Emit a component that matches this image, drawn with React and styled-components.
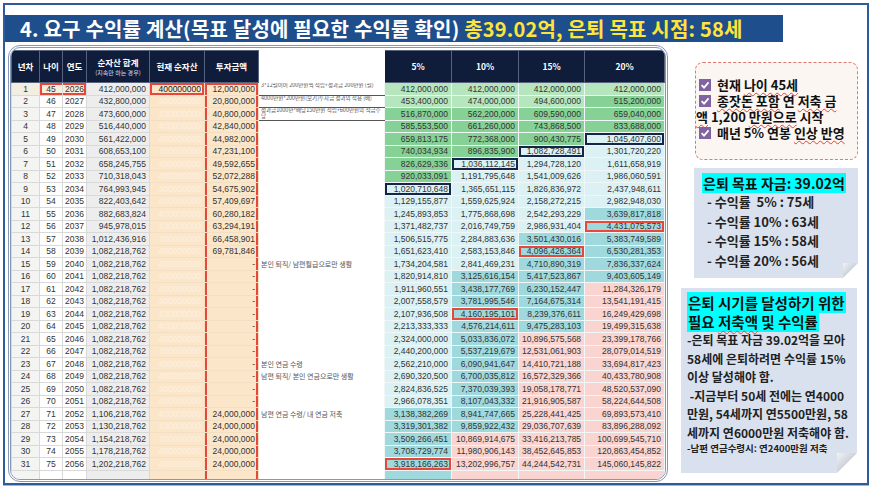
import React from 'react';
import styled, { createGlobalStyle } from 'styled-components';

const GlobalStyle = createGlobalStyle`
  html, body {
    margin: 0;
    padding: 0;
    background: #fff;
  }
  body {
    font-family: "Noto Sans CJK KR", "Noto Sans", sans-serif;
  }
`;

const KR = `"Noto Sans CJK KR", "Noto Sans", sans-serif`;
const RED = '#e8473c';
const NAVY = '#16244a';

const COLS = [28, 23, 24, 63, 55, 54, 126, 67, 67, 66, 80];

// age, year, net total, invest, 5%, 10%, 15%, 20%
const ROWS = [
  ['45', '2026', '412,000,000', '12,000,000', '412,000,000', '412,000,000', '412,000,000', '412,000,000'],
  ['46', '2027', '432,800,000', '20,800,000', '453,400,000', '474,000,000', '494,600,000', '515,200,000'],
  ['47', '2028', '473,600,000', '40,800,000', '516,870,000', '562,200,000', '609,590,000', '659,040,000'],
  ['48', '2029', '516,440,000', '42,840,000', '585,553,500', '661,260,000', '743,868,500', '833,688,000'],
  ['49', '2030', '561,422,000', '44,982,000', '659,813,175', '772,368,000', '900,430,775', '1,045,407,600'],
  ['50', '2031', '608,653,100', '47,231,100', '740,034,934', '896,835,900', '1,082,728,491', '1,301,720,220'],
  ['51', '2032', '658,245,755', '49,592,655', '826,629,336', '1,036,112,145', '1,294,728,120', '1,611,658,919'],
  ['52', '2033', '710,318,043', '52,072,288', '920,033,091', '1,191,795,648', '1,541,009,626', '1,986,060,591'],
  ['53', '2034', '764,993,945', '54,675,902', '1,020,710,648', '1,365,651,115', '1,826,836,972', '2,437,948,611'],
  ['54', '2035', '822,403,642', '57,409,697', '1,129,155,877', '1,559,625,924', '2,158,272,215', '2,982,948,030'],
  ['55', '2036', '882,683,824', '60,280,182', '1,245,893,853', '1,775,868,698', '2,542,293,229', '3,639,817,818'],
  ['56', '2037', '945,978,015', '63,294,191', '1,371,482,737', '2,016,749,759', '2,986,931,404', '4,431,075,573'],
  ['57', '2038', '1,012,436,916', '66,458,901', '1,506,515,775', '2,284,883,636', '3,501,430,016', '5,383,749,589'],
  ['58', '2039', '1,082,218,762', '69,781,846', '1,651,623,410', '2,583,153,846', '4,096,426,364', '6,530,281,353'],
  ['59', '2040', '1,082,218,762', '-', '1,734,204,581', '2,841,469,231', '4,710,890,319', '7,836,337,624'],
  ['60', '2041', '1,082,218,762', '-', '1,820,914,810', '3,125,616,154', '5,417,523,867', '9,403,605,149'],
  ['61', '2042', '1,082,218,762', '-', '1,911,960,551', '3,438,177,769', '6,230,152,447', '11,284,326,179'],
  ['62', '2043', '1,082,218,762', '-', '2,007,558,579', '3,781,995,546', '7,164,675,314', '13,541,191,415'],
  ['63', '2044', '1,082,218,762', '-', '2,107,936,508', '4,160,195,101', '8,239,376,611', '16,249,429,698'],
  ['64', '2045', '1,082,218,762', '-', '2,213,333,333', '4,576,214,611', '9,475,283,103', '19,499,315,638'],
  ['65', '2046', '1,082,218,762', '-', '2,324,000,000', '5,033,836,072', '10,896,575,568', '23,399,178,766'],
  ['66', '2047', '1,082,218,762', '-', '2,440,200,000', '5,537,219,679', '12,531,061,903', '28,079,014,519'],
  ['67', '2048', '1,082,218,762', '-', '2,562,210,000', '6,090,941,647', '14,410,721,188', '33,694,817,423'],
  ['68', '2049', '1,082,218,762', '-', '2,690,320,500', '6,700,035,812', '16,572,329,366', '40,433,780,908'],
  ['69', '2050', '1,082,218,762', '-', '2,824,836,525', '7,370,039,393', '19,058,178,771', '48,520,537,090'],
  ['70', '2051', '1,082,218,762', '-', '2,966,078,351', '8,107,043,332', '21,916,905,587', '58,224,644,508'],
  ['71', '2052', '1,106,218,762', '24,000,000', '3,138,382,269', '8,941,747,665', '25,228,441,425', '69,893,573,410'],
  ['72', '2053', '1,130,218,762', '24,000,000', '3,319,301,382', '9,859,922,432', '29,036,707,639', '83,896,288,092'],
  ['73', '2054', '1,154,218,762', '24,000,000', '3,509,266,451', '10,869,914,675', '33,416,213,785', '100,699,545,710'],
  ['74', '2055', '1,178,218,762', '24,000,000', '3,708,729,774', '11,980,906,143', '38,452,645,853', '120,863,454,852'],
  ['75', '2056', '1,202,218,762', '24,000,000', '3,918,166,263', '13,202,996,757', '44,244,542,731', '145,060,145,822'],
];

const NOTES = {
  1: '3*12월이어 200만원씩 적립+성과금 200만원 (월)',
  2: '4000만원*200만원(보기)투자금 성과의 적용 (배)',
  3: '성과금1000만*배당150만원 적립+600만원의 적금수당',
  15: '본인 퇴직/ 남편월급으로만 생활',
  23: '본인 연금 수령',
  24: '남편 퇴직/ 본인 연금으로만 생활',
  27: '남편 연금 수령/ 내 연금 저축',
};

// [row, rate column index] -> box colour
const MARKS = {
  '9-0': NAVY, '7-1': NAVY, '6-2': NAVY, '5-3': NAVY,
  '31-0': RED, '19-1': RED, '14-2': RED, '12-3': RED,
};

const tone = (s) => {
  const v = Number(s.replace(/,/g, ''));
  if (v < 5e8) return '#b6e6be';
  if (v < 1e9) return '#86d195';
  if (v < 3e9) return '#dbf1f4';
  if (v < 1e10) return '#9fd9dd';
  return '#f9d4d0';
};

const sides = (s, c = RED) =>
  s
    .split('')
    .map((k) => ({ t: `inset 0 2px 0 ${c}`, b: `inset 0 -2px 0 ${c}`, l: `inset 2px 0 0 ${c}`, r: `inset -2px 0 0 ${c}` }[k]))
    .join(', ');

const Frame = styled.div`
  margin: 3px;
  width: 866px;
  height: 482px;
  box-sizing: border-box;
  border: 2px solid #2f5b9c;
  box-shadow: 0 1px 0 #a9b3c2;
  display: flex;
  flex-direction: column;
  overflow: hidden;
`;

const TitleBar = styled.h1`
  margin: 10px 0 0;
  width: 778px;
  height: 27px;
  box-sizing: border-box;
  padding-left: 15px;
  background: #1f4e8c;
  color: #fff;
  font: 700 20px/27px ${KR};
  white-space: nowrap;
  letter-spacing: 0.2px;
  overflow: hidden;
`;

const Yellow = styled.span`
  color: #ffe53b;
`;

const Body = styled.div`
  display: flex;
  margin-top: 3px;
`;

const TablePanel = styled.div`
  margin-left: 3px;
  width: 660px;
  height: 437px;
  box-sizing: border-box;
  border: 3px double #8497b8;
  border-radius: 12px;
  padding-top: 2px;
  overflow: hidden;
`;

const Table = styled.table`
  border-collapse: collapse;
  table-layout: fixed;
  width: 653px;
  font-family: "Liberation Sans", Arial, sans-serif;
  font-size: 8.5px;
  color: #333;
`;

const Col = styled.col`
  width: ${(p) => p.$w}px;
`;

const HeadCell = styled.th`
  height: 31px;
  padding: 0;
  background: ${(p) => (p.$blank ? '#fff' : '#0f1d3b')};
  border: 1px solid ${(p) => (p.$blank ? '#fff' : '#56627e')};
  color: #fff;
  font: 700 8.5px/11px ${KR};
  text-align: center;
  vertical-align: middle;
  white-space: nowrap;
`;

const SubLabel = styled.div`
  font-size: 6px;
  font-weight: 400;
  line-height: 9px;
  color: #d5dae6;
`;

const Row = styled.tr`
  height: 12.5px;
`;

const Cell = styled.td`
  height: 11.5px;
  padding: 0 ${(p) => (p.$align === 'center' ? 0 : 3)}px;
  line-height: 10px;
  white-space: nowrap;
  overflow: hidden;
  text-align: ${(p) => p.$align || 'right'};
  color: ${(p) => p.$color || '#333'};
  background: ${(p) => p.$bg || '#fff'};
  border: 1px solid ${(p) => p.$line || '#d9d9d9'};
  box-shadow: ${(p) => p.$shadow || 'none'};
`;

const NoteCell = styled.td`
  padding: 0 2px;
  border: none;
  border-top: ${(p) => (p.$ruled ? '1px solid #555' : 'none')};
  border-bottom: ${(p) => (p.$ruled ? '1px solid #555' : 'none')};
  background: #fff;
  color: ${(p) => (p.$tiny ? '#777' : '#555')};
  vertical-align: middle;
`;

const NoteText = styled.div`
  height: ${(p) => (p.$tiny ? 11 : 10)}px;
  overflow: hidden;
  font: 400 ${(p) => (p.$tiny ? '5.5px/5.5px' : '7px/10px')} ${KR};
  white-space: ${(p) => (p.$tiny ? 'normal' : 'nowrap')};
`;

const Side = styled.div`
  flex: 1;
  display: flex;
  flex-direction: column;
  align-items: flex-start;
  padding-top: 17px;
`;

const DashedBox = styled.div`
  margin-left: 27px;
  width: 163px;
  height: 98px;
  box-sizing: border-box;
  border: 1.5px dashed #e07a6e;
  border-radius: 8px;
  background: #fbf6f2;
  padding-top: 14px;
  font: 700 13px/16px ${KR};
  color: #111;
  white-space: nowrap;
`;

const Squiggle = styled.span`
  text-decoration: underline wavy #e0453a;
  text-decoration-thickness: 1px;
  text-underline-offset: 2px;
`;

const CheckIcon = styled.svg`
  width: 12px;
  height: 12px;
  margin: 0 6px 0 3px;
  vertical-align: -1px;
`;

const Check = () => (
  <CheckIcon viewBox="0 0 12 12">
    <rect x="0" y="0" width="12" height="12" fill="#8064a2" />
    <path d="M2.6 6.2 L5 8.6 L9.6 3.4" fill="none" stroke="#fff" strokeWidth="1.8" />
  </CheckIcon>
);

const Note = styled.div`
  position: relative;
  margin: ${(p) => p.$top}px 0 0 ${(p) => p.$left}px;
  width: ${(p) => p.$w}px;
  height: ${(p) => p.$h}px;
  box-sizing: border-box;
  padding: ${(p) => p.$pad};
  background: #d9e1ef;
  clip-path: polygon(0 0, 100% 0, 100% calc(100% - ${(p) => p.$fold}px), calc(100% - ${(p) => p.$fold}px) 100%, 0 100%);
  color: #222;
  white-space: pre;

  &::after {
    content: '';
    position: absolute;
    right: 0;
    bottom: 0;
    width: ${(p) => p.$fold}px;
    height: ${(p) => p.$fold}px;
    background: linear-gradient(135deg, #f2f3f6 0%, #c9ced7 55%, #a8aeb9 100%);
    clip-path: polygon(0 0, 100% 0, 0 100%);
  }
`;

const Mark = styled.span`
  background: #00ffff;
  padding: 0 1px;
`;

const NoteTitle = styled.div`
  font: 700 ${(p) => p.$size}px/${(p) => p.$lh}px ${KR};
  color: #111;
`;

const NoteLine = styled.div`
  padding-left: ${(p) => p.$indent || 0}px;
  font: 700 ${(p) => p.$size}px/${(p) => p.$lh}px ${KR};
`;

function DataTable() {
  const heads = [
    ['년차'],
    ['나이'],
    ['연도'],
    ['순자산 합계', '(지속만 하는 경우)'],
    ['현재 순자산'],
    ['투자금액'],
    [''],
    ['5%'],
    ['10%'],
    ['15%'],
    ['20%'],
  ];

  return (
    <Table>
      <colgroup>
        {COLS.map((w, i) => (
          <Col key={i} $w={w} />
        ))}
      </colgroup>
      <thead>
        <tr>
          {heads.map(([label, sub], i) => (
            <HeadCell key={i} $blank={i === 6}>
              {label}
              {sub && <SubLabel>{sub}</SubLabel>}
            </HeadCell>
          ))}
        </tr>
      </thead>
      <tbody>
        {ROWS.map(([age, year, net, inv, ...rates], i) => {
          const n = i + 1;
          const first = n === 1;
          const note = NOTES[n];
          return (
            <Row key={n}>
              <Cell $align="center" $bg={first ? '#f3eee2' : '#f4f4f2'}>{n}</Cell>
              <Cell $align="center" $bg={first ? '#f9eedb' : '#fff'} $shadow={first ? sides('tbl') : undefined}>
                {age}
              </Cell>
              <Cell $align="center" $bg={first ? '#f9eedb' : '#fff'} $shadow={first ? sides('tbr') : undefined}>
                {year}
              </Cell>
              <Cell $bg="#ededed">{net}</Cell>
              <Cell
                $bg="#fbe6ca"
                $line="#f3e0c4"
                $color={first ? '#222' : '#fdf1e1'}
                $shadow={first ? sides('tblr') : undefined}
              >
                400000000
              </Cell>
              <Cell $bg="#fbe6ca" $line="#f3e0c4" $shadow={sides(first ? 'tlr' : 'lr')}>
                {inv}
              </Cell>
              <NoteCell $ruled={n <= 3}>
                <NoteText $tiny={n <= 3}>{note}</NoteText>
              </NoteCell>
              {rates.map((v, k) => {
                const mark = MARKS[`${n}-${k}`];
                return (
                  <Cell key={k} $bg={tone(v)} $line="#f1f6f6" $shadow={mark ? `inset 0 0 0 2px ${mark}` : undefined}>
                    {v}
                  </Cell>
                );
              })}
            </Row>
          );
        })}
        <Row>
          <Cell $bg="#f4f4f2" />
          <Cell />
          <Cell />
          <Cell $bg="#ededed" />
          <Cell $bg="#fbe6ca" $line="#f3e0c4" />
          <Cell $bg="#fbe6ca" $line="#f3e0c4" $shadow={sides('lr')} />
          <NoteCell />
          <Cell $bg="#9fd9dd" $line="#f1f6f6" />
          <Cell $bg="#f9d4d0" $line="#f1f6f6" />
          <Cell $bg="#f9d4d0" $line="#f1f6f6" />
          <Cell $bg="#f9d4d0" $line="#f1f6f6" />
        </Row>
      </tbody>
    </Table>
  );
}

export default function App() {
  return (
    <>
      <GlobalStyle />
      <Frame>
        <TitleBar>
          4. 요구 수익률 계산(목표 달성에 필요한 수익률 확인) <Yellow>총39.02억, 은퇴 목표 시점: 58세</Yellow>
        </TitleBar>
        <Body>
          <TablePanel>
            <DataTable />
          </TablePanel>
          <Side>
            <DashedBox>
              <div>
                <Check />
                현재 <Squiggle>나이 45세</Squiggle>
              </div>
              <div>
                <Check />
                <Squiggle>종잣돈 포함</Squiggle> 연 <Squiggle>저축 금</Squiggle>
                <br />
                <Squiggle>액</Squiggle> 1,200 <Squiggle>만원으로</Squiggle> 시작
              </div>
              <div>
                <Check />
                매년 5% 연봉 <Squiggle>인상 반영</Squiggle>
              </div>
            </DashedBox>

            <Note $top={8} $left={26} $w={164} $h={110} $pad="7px 0 0 8px" $fold={15}>
              <NoteTitle $size={14} $lh={17}>
                <Mark>은퇴 목표 자금: 39.02억</Mark>
              </NoteTitle>
              <NoteLine $indent={5} $size={13} $lh={19.5}>- 수익률  5% : 75세</NoteLine>
              <NoteLine $indent={5} $size={13} $lh={19.5}>- 수익률 10% : 63세</NoteLine>
              <NoteLine $indent={5} $size={13} $lh={19.5}>- 수익률 15% : 58세</NoteLine>
              <NoteLine $indent={5} $size={13} $lh={19.5}>- 수익률 20% : 56세</NoteLine>
            </Note>

            <Note $top={10} $left={13} $w={176} $h={185} $pad="5px 0 0 6px" $fold={20}>
              <NoteTitle $size={14.5} $lh={19}>
                <Mark>은퇴 시기를 달성하기 위한</Mark>
                <br />
                <Mark>
                  필요 <Squiggle>저축액</Squiggle> 및 수익률
                </Mark>
              </NoteTitle>
              <NoteLine $size={12} $lh={18.5}>-은퇴 목표 자금 39.02억을 모아</NoteLine>
              <NoteLine $size={12} $lh={18.5}>58세에 은퇴하려면 수익률 15%</NoteLine>
              <NoteLine $size={12} $lh={18.5}>이상 달성해야 함.</NoteLine>
              <NoteLine $size={12} $lh={18.5}> -지금부터 50세 전에는 연4000</NoteLine>
              <NoteLine $size={12} $lh={18.5}>만원, 54세까지 연5500만원, 58</NoteLine>
              <NoteLine $size={12} $lh={18.5}>세까지 연6000만원 저축해야 함.</NoteLine>
              <NoteLine $size={9.5} $lh={12}>-남편 연금수령시: 연2400만원 저축</NoteLine>
            </Note>
          </Side>
        </Body>
      </Frame>
    </>
  );
}
